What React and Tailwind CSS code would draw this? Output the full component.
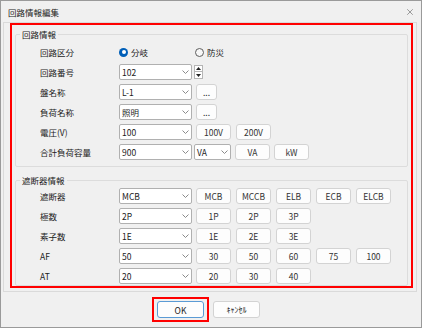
import { X } from 'lucide-react'

function Chevron() {
  return (
    <svg width="7" height="4" viewBox="0 0 7 4" className="shrink-0">
      <polyline points="0.5,0.5 3.5,3.5 6.5,0.5" fill="none" stroke="#8a8a8a" strokeWidth="1" />
    </svg>
  )
}

function Combo({ value, className = 'w-[73px]' }) {
  return (
    <div className={`${className} h-[16px] shrink-0 flex items-center justify-between bg-white border border-[#b0b0b0] rounded-[2px] pl-[2px] pr-[2px]`}>
      <span>{value}</span>
      <Chevron />
    </div>
  )
}

function Btn({ children, className = 'w-[35px]' }) {
  return (
    <button
      type="button"
      className={`${className} h-[16px] shrink-0 flex items-center justify-center bg-[#fdfdfd] border border-[#d3d3d3] rounded-[3px] text-[#333]`}
    >
      {children}
    </button>
  )
}

function Row({ label, children }) {
  return (
    <div className="flex items-center h-[16px]">
      <div className="w-[79px] shrink-0">{label}</div>
      {children}
    </div>
  )
}

function Radio({ checked, label }) {
  return (
    <div className="flex items-center gap-[3px]">
      {checked ? (
        <div className="w-[9px] h-[9px] rounded-full bg-[#005fb8] flex items-center justify-center">
          <div className="w-[4px] h-[4px] rounded-full bg-white" />
        </div>
      ) : (
        <div className="w-[9px] h-[9px] rounded-full border border-[#5d5d5d] bg-[#f7f7f7]" />
      )}
      <span>{label}</span>
    </div>
  )
}

function Spinner() {
  return (
    <div className="ml-[2px] flex flex-col">
      <div className="w-[9px] h-[7px] bg-white border border-[#b5b5b5] flex items-center justify-center">
        <svg width="5" height="3" viewBox="0 0 5 3"><polygon points="2.5,0 5,3 0,3" fill="#222" /></svg>
      </div>
      <div className="w-[9px] h-[7px] bg-white border border-[#b5b5b5] border-t-0 flex items-center justify-center">
        <svg width="5" height="3" viewBox="0 0 5 3"><polygon points="0,0 5,0 2.5,3" fill="#222" /></svg>
      </div>
    </div>
  )
}

export default function App() {
  const breaker = [
    { label: '遮断器', value: 'MCB', btns: ['MCB', 'MCCB', 'ELB', 'ECB', 'ELCB'] },
    { label: '極数', value: '2P', btns: ['1P', '2P', '3P'] },
    { label: '素子数', value: '1E', btns: ['1E', '2E', '3E'] },
    { label: 'AF', value: '50', btns: ['30', '50', '60', '75', '100'] },
    { label: 'AT', value: '20', btns: ['20', '30', '40'] },
  ]

  return (
    <div className="w-[422px] h-[328px] flex flex-col bg-[#f0f0f0] border border-[#9a9a9a] text-[8.5px] leading-[12px] text-[#1b1b1b] font-['Noto_Sans_CJK_JP','Noto_Sans',sans-serif]">
      <div className="h-[21px] shrink-0 flex items-center justify-between pl-[7px] pr-[6px]">
        <span>回路情報編集</span>
        <X size={10} strokeWidth={1.2} color="#444" />
      </div>

      <div className="ml-[2px] mr-[4px] border border-[#dadada] pl-[6px] pr-[3px] pb-[3px]">
        <div className="border-2 border-[#ff0000] px-[3px] pt-[3px]">
          <fieldset className="border border-[#dcdcdc] rounded-[2px] pb-[6px]">
            <legend className="ml-[4px] px-[2px]">回路情報</legend>
            <div className="mt-[4px] pl-[24px] flex flex-col gap-[4px]">
              <Row label="回路区分">
                <div className="flex items-center">
                  <div className="w-[76px]"><Radio checked label="分岐" /></div>
                  <Radio label="防災" />
                </div>
              </Row>
              <Row label="回路番号">
                <Combo value="102" />
                <Spinner />
              </Row>
              <Row label="盤名称">
                <Combo value="L-1" />
                <div className="ml-[4px]"><Btn className="w-[21px]">...</Btn></div>
              </Row>
              <Row label="負荷名称">
                <Combo value="照明" />
                <div className="ml-[4px]"><Btn className="w-[21px]">...</Btn></div>
              </Row>
              <Row label="電圧(V)">
                <Combo value="100" />
                <div className="ml-[4px] flex gap-[5px]">
                  <Btn>100V</Btn>
                  <Btn>200V</Btn>
                </div>
              </Row>
              <Row label="合計負荷容量">
                <Combo value="900" />
                <div className="ml-[2px] flex gap-[4px]">
                  <Combo value="VA" className="w-[37px]" />
                  <Btn>VA</Btn>
                  <Btn>kW</Btn>
                </div>
              </Row>
            </div>
          </fieldset>

          <fieldset className="mt-[7px] border border-[#dcdcdc] rounded-[2px] pb-[1px]">
            <legend className="ml-[4px] px-[2px]">遮断器情報</legend>
            <div className="mt-[2px] pl-[24px] flex flex-col gap-[4px]">
              {breaker.map((r) => (
                <Row key={r.label} label={r.label}>
                  <Combo value={r.value} />
                  <div className="ml-[4px] flex gap-[5px]">
                    {r.btns.map((b) => (
                      <Btn key={b}>{b}</Btn>
                    ))}
                  </div>
                </Row>
              ))}
            </div>
          </fieldset>
        </div>
      </div>

      <div className="flex-1 flex items-center pl-[151px]">
        <div className="border-2 border-[#ff0000] px-[3px] py-[2px]">
          <button
            type="button"
            className="w-[47px] h-[17px] flex items-center justify-center bg-[#fdfdfd] border border-[#5b9bd5] rounded-[3px]"
          >
            OK
          </button>
        </div>
        <button
          type="button"
          className="ml-[4px] w-[47px] h-[17px] flex items-center justify-center bg-[#fdfdfd] border border-[#d3d3d3] rounded-[3px] text-[8px]"
        >
          ｷｬﾝｾﾙ
        </button>
      </div>
    </div>
  )
}
